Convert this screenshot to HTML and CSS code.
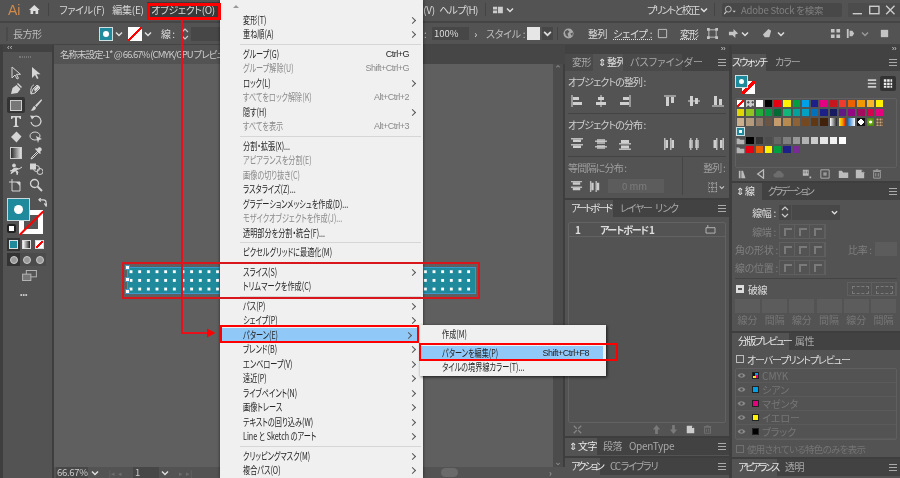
FILE: index.html
```html
<!DOCTYPE html>
<html lang="ja">
<head>
<meta charset="utf-8">
<title>Illustrator</title>
<link rel="stylesheet" href="styles.css">
</head>
<body>
<svg class="defs" width="0" height="0" aria-hidden="true">
  <symbol id="i-arrow" viewBox="0 0 14 14"><path d="M3 1v11l3-3 2 4 1.500-.7-2-4h4z" fill="none" stroke="currentColor"/></symbol>
  <symbol id="i-darrow" viewBox="0 0 14 14"><path d="M3 1v11l3-3 2 4 1.500-.7-2-4h4z" fill="currentColor"/></symbol>
  <symbol id="i-pen" viewBox="0 0 14 14"><path d="M2 12l1.500-6 4-3 4 4-3 4z" fill="currentColor"/><path d="M8.500 1.500l4 4" stroke="currentColor" stroke-width="1.500"/></symbol>
  <symbol id="i-curve" viewBox="0 0 14 14"><path d="M2 12C1 7 3 3 5 3M2 12l4-1 5-5-3-3-4 4z" fill="none" stroke="currentColor"/><path d="M6 10l5-5-2-2-4 4z" fill="currentColor"/></symbol>
  <symbol id="i-brush" viewBox="0 0 14 14"><path d="M12.500 1L6 7.500 7.500 9 13 2.500z" fill="currentColor"/><path d="M5.500 8C3.500 8.500 4 11 1.500 12.500c3 .5 5.500-.5 5.500-3z" fill="currentColor"/></symbol>
  <symbol id="i-t" viewBox="0 0 14 14"><path d="M2 2h10v3h-1l-1-1.500H8v8l1.500.5v1h-5v-1l1.500-.5v-8H4L3 5H2z" fill="currentColor"/></symbol>
  <symbol id="i-rot" viewBox="0 0 14 14"><path d="M3.500 3.500A5 5 0 1 1 2 8" fill="none" stroke="currentColor" stroke-width="1.200"/><path d="M1 1.500l5 .5-3 3.500z" fill="currentColor"/></symbol>
  <symbol id="i-eraser" viewBox="0 0 14 14"><path d="M7.500 1.500l5 5-5 6-5.500-5.500z" fill="currentColor"/></symbol>
  <symbol id="i-shape" viewBox="0 0 14 14"><ellipse cx="6" cy="6" rx="5" ry="4" fill="none" stroke="currentColor"/><path d="M7 6l6 3-3 1-1 3z" fill="currentColor"/></symbol>
  <symbol id="i-grad" viewBox="0 0 14 14"><defs><linearGradient id="g1"><stop offset="0" stop-color="#222"/><stop offset="1" stop-color="#eee"/></linearGradient></defs><rect x="1.500" y="1.500" width="11" height="11" fill="url(#g1)" stroke="#ccc"/></symbol>
  <symbol id="i-drop" viewBox="0 0 14 14"><path d="M9 5l-6 6-1 2 2-1 6-6" fill="none" stroke="currentColor"/><path d="M8 3l1.500-1.500c2-1 4 1 3 3L11 6l1 1-1 1-5-5 1-1z" fill="currentColor"/></symbol>
  <symbol id="i-blend" viewBox="0 0 14 14"><path d="M5 2a1.500 1.500 0 1 1 0 3 1.500 1.500 0 0 1 0-3zM2 12l2-5 3-1 3 1 3-2M6 8l3 2-1 3M4 8l-3 1" fill="currentColor" stroke="currentColor"/></symbol>
  <symbol id="i-sym" viewBox="0 0 14 14"><rect x="1" y="1.500" width="6" height="6" fill="currentColor"/><circle cx="7.500" cy="6.500" r="3" fill="none" stroke="currentColor"/><circle cx="11" cy="9.500" r="3" fill="none" stroke="currentColor"/></symbol>
  <symbol id="i-board" viewBox="0 0 14 14"><path d="M3 1v3H0M3 4h8v9H3z" fill="none" stroke="currentColor"/><path d="M7 4l4 4V4z" fill="currentColor"/></symbol>
  <symbol id="i-zoom" viewBox="0 0 14 14"><circle cx="5.500" cy="5.500" r="4" fill="none" stroke="currentColor" stroke-width="1.300"/><path d="M8.500 8.500l4.500 4.500" stroke="currentColor" stroke-width="2"/></symbol>
  <symbol id="i-burger" viewBox="0 0 8 7"><path d="M0 .5h8M0 3.500h8M0 6.500h8" stroke="currentColor"/></symbol>
  <symbol id="i-chev" viewBox="0 0 8 8"><path d="M1 2.500l3 3 3-3" fill="none" stroke="currentColor" stroke-width="1.500"/></symbol>
  <symbol id="i-updn" viewBox="0 0 8 12"><path d="M1 4l3-3 3 3M1 8l3 3 3-3" fill="none" stroke="currentColor" stroke-width="1.200"/></symbol>
  <symbol id="i-al" viewBox="0 0 14 14"><path d="M1 1h2v12H1z" fill="#999"/><path d="M3 3h6v3H3zM3 8h9v3H3z" fill="currentColor"/></symbol>
  <symbol id="i-ac" viewBox="0 0 14 14"><path d="M6 1h2v12H6z" fill="#999"/><path d="M4 3h6v3H4zM2 8h10v3H2z" fill="currentColor"/></symbol>
  <symbol id="i-ar" viewBox="0 0 14 14"><path d="M11 1h2v12h-2z" fill="#999"/><path d="M5 3h6v3H5zM2 8h9v3H2z" fill="currentColor"/></symbol>
  <symbol id="i-at" viewBox="0 0 14 14"><path d="M1 1h12v2H1z" fill="#999"/><path d="M3 3h3v9H3zM8 3h3v6H8z" fill="currentColor"/></symbol>
  <symbol id="i-am" viewBox="0 0 14 14"><path d="M1 6h12v2H1z" fill="#999"/><path d="M3 2h3v10H3zM8 4h3v6H8z" fill="currentColor"/></symbol>
  <symbol id="i-ab" viewBox="0 0 14 14"><path d="M1 11h12v2H1z" fill="#999"/><path d="M3 2h3v9H3zM8 5h3v6H8z" fill="currentColor"/></symbol>
  <symbol id="i-dt" viewBox="0 0 14 14"><path d="M1 1h12v1.500H1zM1 7h12v1.500H1z" fill="#bbb"/><path d="M3 2.500h8v2.500H3zM3 8.500h8V11H3z" fill="currentColor"/></symbol>
  <symbol id="i-dm" viewBox="0 0 14 14"><path d="M1 3.500h12V5H1zM1 9h12v1.500H1z" fill="#bbb"/><path d="M3 2h8v5H3zM3 8h8v4H3z" fill="currentColor" opacity=".7"/></symbol>
  <symbol id="i-db" viewBox="0 0 14 14"><path d="M1 6h12v1.500H1zM1 11.500h12V13H1z" fill="#bbb"/><path d="M3 3h8v3H3zM3 8.500h8v3H3z" fill="currentColor"/></symbol>
  <symbol id="i-dl" viewBox="0 0 14 14"><path d="M1 1h1.500v12H1zM7 1h1.500v12H7z" fill="#bbb"/><path d="M2.500 3H5v8H2.500zM8.500 3H11v8H8.500z" fill="currentColor"/></symbol>
  <symbol id="i-dc" viewBox="0 0 14 14"><path d="M3 1h1.500v12H3zM9 1h1.500v12H9z" fill="#bbb"/><path d="M2 3h4v8H2zM8 3h4v8H8z" fill="currentColor" opacity=".7"/></symbol>
  <symbol id="i-dr" viewBox="0 0 14 14"><path d="M5 1h1.500v12H5zM11.500 1H13v12h-1.500z" fill="#bbb"/><path d="M2.500 3H5v8H2.500zM9 3h2.500v8H9z" fill="currentColor"/></symbol>
  <symbol id="i-folder" viewBox="0 0 14 12"><path d="M1 2h4l1.500 2H13v7H1z" fill="currentColor"/></symbol>
  <symbol id="i-new" viewBox="0 0 12 12"><path d="M1 1h7l3 3v7H1z" fill="currentColor"/><path d="M8 1v3h3" fill="#555"/></symbol>
  <symbol id="i-trash" viewBox="0 0 12 12"><path d="M2 3h8v8H2zM1 2h10M4.500 1h3M4.500 5v4M7.500 5v4" fill="none" stroke="currentColor"/></symbol>
  <symbol id="i-eye" viewBox="0 0 14 10"><path d="M1 5c3-4.500 9-4.500 12 0-3 4.500-9 4.500-12 0z" fill="currentColor"/><circle cx="7" cy="5" r="2" fill="#505050"/></symbol>
</svg>

<div class="app">
  <header class="menubar jp">
    <span class="logo">Ai</span>
    <svg class="home" viewBox="0 0 14 12"><path d="M7 0l7 6.500h-2V12H8.500V8h-3v4H2V6.500H0z"/></svg>
    <i class="vsep m-home"></i>
    <span class="mn m-file">ファイル(F)</span>
    <span class="mn m-edit">編集(E)</span>
    <span class="mn on">オブジェクト(O)</span>
    <span class="mn m-view">(V)</span>
    <span class="mn m-help">ヘルプ(H)</span>
    <i class="vsep m-v2"></i>
    <svg class="ws" viewBox="0 0 12 8"><path d="M0 0h5v3.500H0zM6 0h6v8H6zM0 4.500h5V8H0z"/></svg>
    <svg class="ch m-wsc"><use href="#i-chev"/></svg>
    <span class="mn m-print">プリントと校正</span>
    <svg class="ch m-prc"><use href="#i-chev"/></svg>
    <i class="vsep m-v3"></i>
    <div class="search">
      <svg class="srch" viewBox="0 0 14 12"><circle cx="5" cy="5" r="3.500" fill="none" stroke="currentColor"/><path d="M2.500 8L0 11" stroke="currentColor" stroke-width="1.500"/><path d="M10 7h4l-2 2z" fill="currentColor"/></svg>
      <span>Adobe Stock を検索</span>
    </div>
    <div class="winbtns">
      <svg viewBox="0 0 18 14"><path d="M4 11h10" stroke="currentColor" stroke-width="1.500"/></svg>
      <svg viewBox="0 0 18 14"><rect x="4" y="3" width="10" height="8" fill="none" stroke="currentColor" stroke-width="1.500"/></svg>
      <svg viewBox="0 0 18 14"><path d="M4.500 2.500l9 9M13.500 2.500l-9 9" stroke="currentColor" stroke-width="1.500"/></svg>
    </div>
  </header>

  <div class="ctrl jp">
    <i class="grip"></i>
    <span class="c-name">長方形</span>
    <span class="sw-fill"><b></b></span>
    <svg class="ch c-ch1"><use href="#i-chev"/></svg>
    <span class="sw-stroke c-stroke"></span>
    <svg class="ch c-ch1"><use href="#i-chev"/></svg>
    <span class="c-sen">線 :</span>
    <svg class="updn"><use href="#i-updn"/></svg>
    <span class="c-input"></span>
    <span class="c-colon">:</span>
    <span class="c-pct">100%</span>
    <span class="c-more">›</span>
    <span class="c-style">スタイル :</span>
    <span class="c-styleb"></span>
    <svg class="ch c-ch2"><use href="#i-chev"/></svg>
    <i class="vsep c-v"></i>
    <svg class="globe" viewBox="0 0 12 12"><circle cx="6" cy="6" r="5.500" fill="#a8a8a8"/><path d="M2 4l3-2 2 2-2 2 1 4-3-2zM8 6l3-1-1 4z" fill="#555"/></svg>
    <span class="c-seiretsu">整列</span>
    <span class="c-shape">シェイプ :</span>
    <svg class="ci c-i1" viewBox="0 0 12 12"><path d="M1.500 1.500h9v9h-9z" fill="none" stroke="currentColor"/></svg>
    <span class="c-henkei">変形</span>
    <svg class="ci c-i2" viewBox="0 0 12 12"><path d="M2 2h8v8H2z" fill="none" stroke="currentColor"/><path d="M0 0h3v3H0zM9 0h3v3H9zM0 9h3v3H0zM9 9h3v3H9z" fill="currentColor"/></svg>
    <svg class="ci c-i3" viewBox="0 0 12 12"><path d="M1 4h5V1l5 5-3 1v4L5 8H1z" fill="currentColor"/></svg>
    <svg class="ch c-ch3"><use href="#i-chev"/></svg>
    <svg class="ci c-i4" viewBox="0 0 12 12"><path d="M1 7l6-6 3 2-2 7H3z" fill="currentColor"/></svg>
    <svg class="ch c-ch4"><use href="#i-chev"/></svg>
    <svg class="ci c-i5" viewBox="0 0 12 12"><path d="M1 1h4v4H1zM7 1h4v4H7zM1 7h4v4H1zM7 7h4v4H7z" fill="currentColor"/></svg>
    <svg class="ci c-i6" viewBox="0 0 12 12"><path d="M2 1h2v10H2zM5 3h3l2 3-2 3H5z" fill="currentColor"/></svg>
    <svg class="ch c-ch5"><use href="#i-chev"/></svg>
    <svg class="ci c-i7" viewBox="0 0 12 12"><path d="M2 2h8v8H2z" fill="currentColor"/></svg>
  </div>

  <div class="main">
    <aside class="tools">
      <div class="t-head">‹‹</div>
      <div class="t-grip"></div>
      <div class="t-grid">
        <svg class="tl"><use href="#i-arrow"/></svg><svg class="tl"><use href="#i-darrow"/></svg>
        <svg class="tl"><use href="#i-pen"/></svg><svg class="tl"><use href="#i-curve"/></svg>
        <span class="t-rect"><i></i></span><svg class="tl"><use href="#i-brush"/></svg>
        <svg class="tl"><use href="#i-t"/></svg><svg class="tl"><use href="#i-rot"/></svg>
        <svg class="tl"><use href="#i-eraser"/></svg><svg class="tl"><use href="#i-shape"/></svg>
        <svg class="tl"><use href="#i-grad"/></svg><svg class="tl"><use href="#i-drop"/></svg>
        <svg class="tl"><use href="#i-blend"/></svg><svg class="tl"><use href="#i-sym"/></svg>
        <svg class="tl"><use href="#i-board"/></svg><svg class="tl"><use href="#i-zoom"/></svg>
      </div>
      <div class="fs">
        <span class="fs-stroke"></span>
        <span class="fs-fill"><b></b></span>
        <svg class="fs-swap" viewBox="0 0 10 10"><path d="M1 2h5a3 3 0 0 1 3 3v3M7 6l2 3 1-3M3 0L1 2l2 2" fill="none" stroke="currentColor" stroke-width="1.300"/></svg>
        <span class="fs-def"></span>
      </div>
      <div class="t-modes">
        <span class="tm tm-on"><i class="tm-c"></i></span>
        <span class="tm"><i class="tm-g"></i></span>
        <span class="tm"><i class="tm-n"></i></span>
      </div>
      <div class="t-draw">
        <span class="td td-on"><i></i></span><span class="td"><i></i></span><span class="td"><i></i></span>
      </div>
      <svg class="t-screen" viewBox="0 0 16 12"><rect x="4.500" y=".5" width="11" height="7" fill="#555" stroke="#bbb"/><rect x=".5" y="4.500" width="9" height="7" fill="#777" stroke="#bbb"/></svg>
      <div class="t-dots">•••</div>
    </aside>

    <section class="doc">
      <div class="doctabs jp"><span class="doctab">名称未設定-1* @ 66.67% (CMYK/GPU プレビュー)</span></div>
      <div class="docmid">
        <div class="canvas">
          <div class="artwork"><i class="h h1"></i><i class="h h2"></i><i class="h h3"></i></div>
        </div>
        <div class="vscroll"><span>⌃</span><span>⌄</span></div>
      </div>
      <div class="status jp">
        <span class="st-zoom">66.67%</span>
        <svg class="ch st-c1"><use href="#i-chev"/></svg>
        <span class="st-nav st-n1">|◂&nbsp;&nbsp;◂</span>
        <span class="st-page">1</span>
        <svg class="ch st-c2"><use href="#i-chev"/></svg>
        <span class="st-nav st-n2">▸&nbsp;&nbsp;▸|</span>
        <span class="st-thumb"></span>
        <span class="st-right">›</span>
      </div>
    </section>

    <div class="col col1 jp">
      <div class="coltop">››</div>
      <section class="panel p-align">
        <div class="tabs">
          <span class="tab t-a">変形</span><span class="tab on t-b">⇕ 整列</span><span class="tab t-c">パスファインダー</span>
          <svg class="burger"><use href="#i-burger"/></svg>
        </div>
        <div class="pb">
          <h3 class="lab">オブジェクトの整列 :</h3>
          <div class="alrow">
            <svg><use href="#i-al"/></svg><svg><use href="#i-ac"/></svg><svg><use href="#i-ar"/></svg>
            <i></i>
            <svg><use href="#i-at"/></svg><svg><use href="#i-am"/></svg><svg><use href="#i-ab"/></svg>
          </div>
          <hr class="psep">
          <h3 class="lab">オブジェクトの分布 :</h3>
          <div class="alrow">
            <svg><use href="#i-dt"/></svg><svg><use href="#i-dm"/></svg><svg><use href="#i-db"/></svg>
            <i></i>
            <svg><use href="#i-dl"/></svg><svg><use href="#i-dc"/></svg><svg><use href="#i-dr"/></svg>
          </div>
          <hr class="psep">
          <div class="spacing">
            <div class="sp-l">
              <h3 class="lab dim">等間隔に分布 :</h3>
              <div class="sp-ctl">
                <svg><use href="#i-dt"/></svg><svg><use href="#i-dl"/></svg>
                <span class="sp-in">0 mm</span>
              </div>
            </div>
            <div class="sp-r">
              <h3 class="lab dim">整列 :</h3>
              <svg class="sp-grid" viewBox="0 0 16 10"><path d="M1 1h8M1 5h8M1 9h8M0 0v10M4 0v10M8 0v10" stroke="#bbb" stroke-dasharray="1 1"/><path d="M11 4l2 2 2-2" fill="none" stroke="#ccc"/></svg>
            </div>
          </div>
        </div>
      </section>

      <section class="panel p-board">
        <div class="tabs">
          <span class="tab on t-d">アートボード</span><span class="tab t-e">レイヤー</span><span class="tab t-f">リンク</span>
          <svg class="burger"><use href="#i-burger"/></svg>
        </div>
        <div class="pb pb-board">
          <div class="blist">
            <div class="brow"><b>1</b><b>アートボード 1</b><svg class="bic" viewBox="0 0 12 10"><path d="M1 3h10v6H1zM3 3V0" fill="none" stroke="#bbb"/></svg></div>
          </div>
          <div class="bfoot">
            <svg class="bf1" viewBox="0 0 12 12"><path d="M1 1l4 4M11 1L7 5M1 11l4-4M11 11L7 7" stroke="#888" stroke-width="1.500"/></svg>
            <svg class="bf-up" viewBox="0 0 10 10"><path d="M5 0l4 5H6.500v5h-3V5H1z"/></svg>
            <svg class="bf-dn" viewBox="0 0 10 10"><path d="M5 10l4-5H6.500V0h-3v5H1z"/></svg>
            <svg class="bf-new"><use href="#i-new"/></svg>
            <svg class="bf-tr"><use href="#i-trash"/></svg>
          </div>
        </div>
      </section>

      <section class="panel p-char">
        <div class="tabs">
          <span class="tab on t-g">⇕ 文字</span><span class="tab t-h">段落</span><span class="tab t-i">OpenType</span>
          <svg class="burger"><use href="#i-burger"/></svg>
        </div>
      </section>
      <section class="panel p-act">
        <div class="tabs">
          <span class="tab on t-j">アクション</span><span class="tab t-k">CC ライブラリ</span>
          <svg class="burger"><use href="#i-burger"/></svg>
        </div>
      </section>
    </div>

    <div class="col col2 jp">
      <div class="coltop">››</div>
      <section class="panel p-sw">
        <div class="tabs">
          <span class="tab on t-l">スウォッチ</span><span class="tab t-m">カラー</span>
          <svg class="burger"><use href="#i-burger"/></svg>
        </div>
        <div class="pb pb-sw">
          <div class="sw-top">
            <span class="mini"><i class="mini-s"></i><i class="mini-f"><b></b></i></span>
            <span class="viewbtns">
              <svg class="vb" viewBox="0 0 12 12"><path d="M1 2h10M1 6h10M1 10h10" stroke="#ccc" stroke-width="2"/></svg>
              <svg class="vb vb-on" viewBox="0 0 12 12"><path d="M1 1h3v3H1zM5 1h3v3H5zM9 1h2v3H9zM1 5h3v3H1zM5 5h3v3H5zM9 5h2v3H9zM1 9h3v2H1zM5 9h3v2H5zM9 9h2v2H9z" fill="#eee"/></svg>
            </span>
          </div>
          <div class="swatches">
            <i class="s s-none"></i><i class="s s-reg"></i><i class="s" style="background:#fff"></i><i class="s" style="background:#000"></i><i class="s" style="background:#e60012"></i><i class="s" style="background:#fff100"></i><i class="s" style="background:#009e41"></i><i class="s" style="background:#00a0e9"></i><i class="s" style="background:#1d2088"></i><i class="s" style="background:#e4007f"></i><i class="s" style="background:#c7161d"></i><i class="s" style="background:#ef3a2d"></i><i class="s" style="background:#eb6100"></i><i class="s" style="background:#f39800"></i><i class="s" style="background:#f8b62d"></i><i class="s" style="background:#fff100"></i>
            <i class="s" style="background:#dfd800"></i><i class="s" style="background:#8fc31f"></i><i class="s" style="background:#22ac38"></i><i class="s" style="background:#009944"></i><i class="s" style="background:#006934"></i><i class="s" style="background:#13b67a"></i><i class="s" style="background:#00a29a"></i><i class="s" style="background:#00a0c1"></i><i class="s" style="background:#0071bc"></i><i class="s" style="background:#1d2088"></i><i class="s" style="background:#171c61"></i><i class="s" style="background:#601986"></i><i class="s" style="background:#920783"></i><i class="s" style="background:#a40b5d"></i><i class="s" style="background:#d6004e"></i><i class="s" style="background:#e4007f"></i>
            <i class="s" style="background:#cbb08f"></i><i class="s" style="background:#b59a7d"></i><i class="s" style="background:#8f7b68"></i><i class="s" style="background:#6a5444"></i><i class="s" style="background:#c69c6d"></i><i class="s" style="background:#b98a50"></i><i class="s" style="background:#8c6239"></i><i class="s" style="background:#75491f"></i><i class="s" style="background:#603813"></i><i class="s" style="background:#42210b"></i><i class="s s-gr1"></i><i class="s s-gr2"></i><i class="s s-gr3"></i><i class="s s-p1"></i><i class="s s-p2"></i><i class="s s-p3"></i>
            <i class="s s-pat"></i>
            <svg class="s-fold"><use href="#i-folder"/></svg><i class="s" style="background:#000"></i><i class="s" style="background:#333"></i><i class="s" style="background:#4d4d4d"></i><i class="s" style="background:#666"></i><i class="s" style="background:#808080"></i><i class="s" style="background:#999"></i><i class="s" style="background:#b3b3b3"></i><i class="s" style="background:#ccc"></i><i class="s" style="background:#e6e6e6"></i><i class="s" style="background:#f2f2f2"></i><i class="s" style="background:#fff"></i>
            <svg class="s-fold"><use href="#i-folder"/></svg><i class="s" style="background:#e60012"></i><i class="s" style="background:#eb6100"></i><i class="s" style="background:#fff100"></i><i class="s" style="background:#009e41"></i><i class="s" style="background:#1d2088"></i><i class="s" style="background:#7b2a95"></i>
          </div>
          <div class="sw-foot">
            <svg class="sf sf1" viewBox="0 0 12 12"><path d="M1 11V2h2v9zM4 11V2h2l3 9z" fill="#bbb"/></svg>
            <svg class="sf sf2" viewBox="0 0 12 12"><path d="M2 6l7-5v10z" fill="none" stroke="#bbb" stroke-width="1.500"/></svg>
            <svg class="sf sf3" viewBox="0 0 14 10"><path d="M3 9a2.500 2.500 0 0 1 0-5 4 4 0 0 1 7.500-.5A3 3 0 0 1 11 9z" fill="#6d6d6d"/></svg>
            <svg class="sf sf4" viewBox="0 0 12 12"><path d="M1 1h7v7H1z M2 2v1h1V2zM4 2v1h1V2zM6 2v1h1V2zM2 4v1h1V4zM4 4v1h1V4zM6 4v1h1V4zM9 9h2v2H9z" fill="#bbb" fill-rule="evenodd"/></svg>
            <svg class="sf sf5" viewBox="0 0 12 12"><path d="M1 1h10v10H1z" fill="none" stroke="#bbb"/><path d="M4 4h4v4H4z" fill="#999"/></svg>
            <svg class="sf sf6"><use href="#i-folder"/></svg>
            <svg class="sf sf7"><use href="#i-new"/></svg>
            <svg class="sf sf8"><use href="#i-trash"/></svg>
          </div>
        </div>
      </section>

      <section class="panel p-st">
        <div class="tabs">
          <span class="tab on t-n">⇕ 線</span><span class="tab t-o">グラデーション</span>
          <svg class="burger"><use href="#i-burger"/></svg>
        </div>
        <div class="pb pb-st">
          <div class="strow"><label class="bright">線幅 :</label><span class="w-box"><svg class="updn"><use href="#i-updn"/></svg></span><span class="w-in"></span><svg class="ch w-ch"><use href="#i-chev"/></svg></div>
          <div class="strow"><label>線端 :</label><span class="tri"><i></i><i></i><i></i></span></div>
          <div class="strow"><label>角の形状 :</label><span class="tri"><i></i><i></i><i></i></span><label class="ratio">比率 :</label><span class="r-in"></span></div>
          <div class="strow"><label>線の位置 :</label><span class="tri"><i></i><i></i><i></i></span></div>
          <hr class="psep st-sep">
          <div class="dash"><span class="cb cb-on"></span><span class="dash-t">破線</span><span class="dashbtn"><i></i><i></i></span></div>
          <div class="dashgrid">
            <i></i><i></i><i></i><i></i><i></i><i></i>
            <span>線分</span><span>間隔</span><span>線分</span><span>間隔</span><span>線分</span><span>間隔</span>
          </div>
        </div>
      </section>

      <section class="panel p-sep">
        <div class="tabs">
          <span class="tab on t-p">分版プレビュー</span><span class="tab t-q">属性</span>
        </div>
        <div class="pb pb-sep">
          <div class="op"><span class="cb"></span><span>オーバープリントプレビュー</span></div>
          <div class="plates">
            <div class="plate"><svg class="eye"><use href="#i-eye"/></svg><i class="chip chip-cmyk"></i><span>CMYK</span></div>
            <div class="plate"><svg class="eye"><use href="#i-eye"/></svg><i class="chip chip-c"></i><span>シアン</span></div>
            <div class="plate"><svg class="eye"><use href="#i-eye"/></svg><i class="chip chip-m"></i><span>マゼンタ</span></div>
            <div class="plate"><svg class="eye"><use href="#i-eye"/></svg><i class="chip chip-y"></i><span>イエロー</span></div>
            <div class="plate"><svg class="eye"><use href="#i-eye"/></svg><i class="chip chip-k"></i><span>ブラック</span></div>
          </div>
          <div class="op op-dim"><span class="cb"></span><span>使用されている特色のみを表示</span></div>
        </div>
      </section>

      <section class="panel p-app">
        <div class="tabs">
          <span class="tab on t-r">アピアランス</span><span class="tab t-s">透明</span>
          <svg class="burger"><use href="#i-burger"/></svg>
        </div>
      </section>
    </div>
  </div>

  <nav class="menu jp">
    <div class="mi up"></div>
    <div class="mi sub"><span>変形(T)</span></div>
    <div class="mi sub"><span>重ね順(A)</span></div>
    <div class="ms"></div>
    <div class="mi"><span>グループ(G)</span><kbd>Ctrl+G</kbd></div>
    <div class="mi off"><span>グループ解除(U)</span><kbd>Shift+Ctrl+G</kbd></div>
    <div class="mi sub"><span>ロック(L)</span></div>
    <div class="mi off"><span>すべてをロック解除(K)</span><kbd>Alt+Ctrl+2</kbd></div>
    <div class="mi sub"><span>隠す(H)</span></div>
    <div class="mi off"><span>すべてを表示</span><kbd>Alt+Ctrl+3</kbd></div>
    <div class="ms"></div>
    <div class="mi"><span>分割・拡張(X)...</span></div>
    <div class="mi off"><span>アピアランスを分割(E)</span></div>
    <div class="mi off"><span>画像の切り抜き(C)</span></div>
    <div class="mi"><span>ラスタライズ(Z)...</span></div>
    <div class="mi"><span>グラデーションメッシュを作成(D)...</span></div>
    <div class="mi off"><span>モザイクオブジェクトを作成(J)...</span></div>
    <div class="mi"><span>透明部分を分割・統合(F)...</span></div>
    <div class="ms"></div>
    <div class="mi"><span>ピクセルグリッドに最適化(M)</span></div>
    <div class="ms"></div>
    <div class="mi sub"><span>スライス(S)</span></div>
    <div class="mi"><span>トリムマークを作成(C)</span></div>
    <div class="ms"></div>
    <div class="mi sub"><span>パス(P)</span></div>
    <div class="mi sub"><span>シェイプ(P)</span></div>
    <div class="mi sub hl"><span>パターン(E)</span></div>
    <div class="mi sub"><span>ブレンド(B)</span></div>
    <div class="mi sub"><span>エンベロープ(V)</span></div>
    <div class="mi sub"><span>遠近(P)</span></div>
    <div class="mi sub"><span>ライブペイント(N)</span></div>
    <div class="mi sub"><span>画像トレース</span></div>
    <div class="mi sub"><span>テキストの回り込み(W)</span></div>
    <div class="mi sub"><span>Line と Sketch のアート</span></div>
    <div class="ms"></div>
    <div class="mi sub"><span>クリッピングマスク(M)</span></div>
    <div class="mi sub"><span>複合パス(O)</span></div>
  </nav>

  <nav class="submenu jp">
    <div class="mi"><span>作成(M)</span></div>
    <div class="ms"></div>
    <div class="mi hl"><span>パターンを編集(P)</span><kbd>Shift+Ctrl+F8</kbd></div>
    <div class="mi"><span>タイルの境界線カラー(T)...</span></div>
  </nav>

  <i class="mark mk-obj"></i>
  <i class="mark mk-art"></i>
  <i class="mark mk-pat"></i>
  <i class="mark mk-edit"></i>
  <svg class="leader" viewBox="0 0 900 478"><path d="M182 20V333H208" fill="none" stroke="#e8101a" stroke-width="2"/><path d="M207 328.500l8.500 4.500-8.500 4.500z" fill="#f00"/></svg>
</div>
</body>
</html>
```

FILE: styles.css
```css
* { box-sizing: border-box; }
html, body { margin: 0; padding: 0; background: #535353; }
.defs { position: absolute; }
i, b { font-style: normal; font-weight: normal; }
h3 { margin: 0; font-weight: normal; }
svg { display: block; }

.jp {
  font-family: "Noto Sans CJK JP", "Noto Sans", sans-serif;
  font-size: 10px;
  font-feature-settings: "palt";
}

.app {
  position: relative;
  width: 900px;
  height: 478px;
  overflow: hidden;
  background: #535353;
  display: flex;
  flex-direction: column;
  filter: blur(.4px);
}

/* top menu bar */
.menubar {
  height: 23px;
  flex: none;
  display: flex;
  align-items: center;
  background: #535353;
  border-bottom: 2px solid #454545;
  color: #d8d8d8;
  letter-spacing: -.2px;
  padding-bottom: 2px;
}
.logo { margin-left: 8px; width: 14px; color: #d08a4a; font: 14px "Liberation Sans", sans-serif; letter-spacing: 0; }
.home { width: 13px; height: 11px; margin-left: 9px; fill: #ddd; }
.vsep { display: block; width: 1px; height: 13px; background: #444; flex: none; }
.m-home { margin-left: 8px; }
.mn { white-space: nowrap; flex: none; }
.m-file { margin-left: 10px; width: 53px; }
.m-edit { width: 35px; }
.mn.on { background: #3a3a3a; width: 74px; height: 16px; padding-left: 4px; line-height: 16px; letter-spacing: -.35px; }
.m-view { margin-left: 202px; width: 16px; }
.m-help { width: 46px; letter-spacing: -.7px; }
.ws { width: 12px; height: 8px; margin-left: 7px; fill: #ccc; }
.ch { width: 8px; height: 8px; color: #ddd; flex: none; }
.m-wsc { margin-left: 3px; }
.m-print { margin-left: 133px; width: 50px; letter-spacing: -1.6px; }
.m-prc { margin-left: 3px; }
.m-v3 { margin-left: 6px; }
.search {
  margin-left: 7px;
  width: 120px;
  height: 14px;
  flex: none;
  background: #484848;
  border-radius: 2px;
  display: flex;
  align-items: center;
  gap: 5px;
  padding-left: 2px;
  color: #808080;
  font-size: 9.500px;
}
.srch { width: 12px; height: 10px; color: #ccc; }
.winbtns { margin-left: 6px; width: 52px; height: 14px; flex: none; display: flex; justify-content: space-between; color: #ccc; background: #4c4c4c; padding: 0 1px; }
.winbtns svg { width: 17px; height: 14px; }

/* control bar */
.ctrl {
  height: 22px;
  flex: none;
  display: flex;
  align-items: center;
  background: #535353;
  border-bottom: 1px solid #444;
  color: #bcbcbc;
  letter-spacing: -.5px;
  white-space: nowrap;
}
.ctrl > span { flex: none; }
.grip { width: 2px; height: 14px; margin-left: 6px; background: #4a4a4a; flex: none; }
.c-name { margin-left: 5px; width: 86px; }
.sw-fill { width: 14px; height: 14px; background: #1f8a9b; border: 1px solid #cfdfe2; display: flex; align-items: center; justify-content: center; flex: none; }
.sw-fill b { width: 6px; height: 6px; border-radius: 50%; background: #fff; }
.c-ch1 { margin-left: 2px; }
.c-stroke { margin-left: 5px; }
.sw-stroke { width: 14px; height: 14px; flex: none; background: linear-gradient(to top left, #fff 45%, #f00 45%, #f00 55%, #fff 55%); }
.c-sen { margin-left: 9px; width: 20px; color: #ddd; }
.updn { width: 8px; height: 12px; color: #ccc; flex: none; }
.c-input { width: 100px; height: 14px; margin-left: 2px; background: #474747; }
.c-colon { margin-left: 133px; width: 8px; }
.c-pct { width: 37px; height: 13px; background: #474747; color: #ddd; padding-left: 2px; line-height: 13px; font-size: 9.500px; letter-spacing: 0; }
.c-more { width: 13px; text-align: center; color: #ddd; }
.c-style { margin-left: 4px; width: 41px; letter-spacing: -.3px; }
.c-styleb { width: 13px; height: 13px; background: #e6e6e6; }
.c-ch2 { margin-left: 2px; background: #474747; height: 13px; width: 11px; padding: 2px 1px; }
.c-v { margin-left: 4px; }
.globe { width: 11px; height: 11px; margin-left: 5px; flex: none; }
.c-seiretsu { margin-left: 14px; width: 25px; color: #ddd; }
.c-shape { width: 42px; color: #ddd; text-decoration: underline dotted; letter-spacing: -.2px; }
.ci { width: 11px; height: 11px; color: #c4c4c4; flex: none; }
.c-i1 { margin-left: 2px; }
.c-henkei { margin-left: 12px; width: 18px; color: #ddd; text-decoration: underline dotted; letter-spacing: -1px; }
.c-i2 { margin-left: 9px; }
.c-i3 { margin-left: 10px; }
.c-ch3 { margin-left: 2px; }
.c-i4 { margin-left: 13px; }
.c-ch4 { margin-left: 4px; }
.c-i5 { margin-left: 45px; }
.c-i6 { margin-left: 4px; }
.c-ch5 { margin-left: 5px; opacity: .5; }
.c-i7 { margin-left: 10px; }

/* main */
.main { flex: 1; display: flex; min-height: 0; background: #3e3e3e; }

.tools {
  width: 51px;
  margin-left: 3px;
  flex: none;
  background: #535353;
  border-right: 2px solid #3e3e3e;
  color: #d4d4d4;
  display: flex;
  flex-direction: column;
  align-items: flex-start;
}
.t-head { width: 100%; height: 7px; background: #424242; color: #ccc; font: 8px/6px "Liberation Sans", sans-serif; padding-left: 4px; }
.t-grip { width: 12px; height: 2px; margin: 4px 0 0 16px; border-top: 1px dotted #777; border-bottom: 1px dotted #777; }
.t-grid { display: grid; grid-template-columns: 20px 20px; grid-auto-rows: 16px; margin: 7px 0 0 3px; justify-items: center; align-items: center; }
.tl { width: 14px; height: 14px; }
.t-rect { width: 18px; height: 16px; background: #333; border-radius: 2px; display: flex; align-items: center; justify-content: center; }
.t-rect i { width: 12px; height: 11px; background: #777; border: 1px solid #ccc; }

.fs { position: relative; width: 46px; height: 38px; margin-top: 5px; flex: none; }
.fs-fill { position: absolute; left: 4px; top: 0; width: 23px; height: 23px; background: #1f8a9b; border: 1px solid #c9d8db; display: flex; align-items: center; justify-content: center; }
.fs-fill b { width: 9px; height: 9px; border-radius: 50%; background: #fff; }
.fs-stroke { position: absolute; left: 16px; top: 12px; width: 24px; height: 24px; border: 5px solid #fff; background: #555; }
.fs-stroke::after { content: ""; position: absolute; left: -9px; top: 7px; width: 33px; height: 1px; background: #f00; border-bottom: 1px solid #f00; transform: rotate(-45deg); }
.fs-swap { position: absolute; left: 35px; top: 0; width: 9px; height: 9px; }
.fs-def { position: absolute; left: 4px; top: 26px; width: 9px; height: 9px; background: #fff; border: 2px solid #222; border-radius: 2px; }

.t-modes, .t-draw { display: grid; grid-template-columns: repeat(3, 13px); margin-left: 4px; }
.t-modes { margin-top: 1px; height: 15px; align-items: center; justify-items: center; }
.tm { width: 13px; height: 13px; display: flex; align-items: center; justify-content: center; }
.tm-on { background: #333; }
.tm i { width: 9px; height: 9px; border: 1px solid #ddd; }
.tm-c { background: #1f8a9b; }
.tm-g { background: linear-gradient(to right, #fff, #222); }
.tm-n { background: linear-gradient(to top left, #fff 42%, #f00 42%, #f00 58%, #fff 58%); }
.t-draw { margin-top: 1px; background: #4b4b4b; height: 13px; }
.td { display: flex; align-items: center; justify-content: center; }
.td-on { background: #333; }
.td i { width: 8px; height: 8px; border-radius: 50%; background: #999; border: 1px solid #ccc; }
.t-screen { width: 15px; height: 11px; margin: 4px 0 0 19px; }
.t-dots { margin: 9px 0 0 17px; font: 7px/10px "Liberation Sans", sans-serif; color: #ccc; letter-spacing: 0; }

.doc { width: 511px; flex: none; display: flex; flex-direction: column; }
.doctabs { height: 19px; background: #464646; flex: none; color: #ccc; letter-spacing: -1px; font-size: 9.500px; }
.doctab { display: block; width: 250px; height: 19px; background: #535353; padding-left: 6px; line-height: 18px; white-space: nowrap; overflow: hidden; }
.docmid { flex: 1; display: flex; min-height: 0; }
.canvas { flex: 1; background: #5f5f5f; position: relative; }
.vscroll { width: 10px; margin-right: 2px; background: #4c4c4c; color: #999; display: flex; flex-direction: column; justify-content: space-between; align-items: center; font: 9px/10px "DejaVu Sans", sans-serif; }
.artwork {
  position: absolute;
  left: 73px;
  top: 203px;
  width: 349px;
  height: 27px;
  border: 1px solid #3a9ad0;
  background-color: #1f8a9b;
  background-image: radial-gradient(circle, #fff 1.400px, transparent 1.900px);
  background-size: 8.670px 8.670px;
  background-position: -1.300px -.6px;
}
.h { position: absolute; left: -3px; width: 5px; height: 5px; background: #fff; border: 1px solid #3a9ad0; }
.h1 { top: -3px; }
.h2 { top: 9px; }
.h3 { top: 21px; }
.status { height: 11px; flex: none; background: #535353; display: flex; align-items: center; color: #ccc; font-size: 9.500px; letter-spacing: -.3px; }
.st-zoom { width: 32px; margin-left: 2px; height: 11px; background: #474747; line-height: 11px; padding-left: 1px; }
.st-c1 { margin-left: 3px; }
.st-nav { color: #6e6e6e; font-size: 7px; letter-spacing: 0; }
.st-n1 { margin-left: 10px; width: 24px; }
.st-page { width: 26px; height: 11px; background: #474747; padding-left: 2px; line-height: 11px; }
.st-c2 { margin-left: 2px; }
.st-n2 { margin-left: 10px; width: 24px; }
.st-thumb { margin-left: 238px; width: 17px; height: 9px; border-radius: 5px; background: #6a6a6a; }
.st-right { margin-left: 91px; color: #aaa; }

/* panels */
.col { flex: none; display: flex; flex-direction: column; gap: 2px; color: #bdbdbd; letter-spacing: -.6px; }
.col1 { width: 164px; }
.col2 { width: 168px; margin-left: 3px; }
.coltop { height: 9px; margin-bottom: -2px; background: #424242; color: #ccc; font: 8px/8px "Liberation Sans", sans-serif; text-align: right; padding-right: 4px; flex: none; }
.panel { background: #535353; flex: none; overflow: hidden; }
.tabs { height: 17px; display: flex; background: #424242; position: relative; }
.tab { display: block; line-height: 16px; padding-left: 7px; color: #a8a8a8; white-space: nowrap; flex: none; }
.tab.on { background: #535353; color: #e6e6e6; }
.burger { position: absolute; right: 3px; top: 5px; width: 8px; height: 7px; color: #aaa; }
.t-a { width: 28px; background: #4a4a4a; }
.t-b { width: 30px; padding-left: 5px; }
.t-c { width: 59px; background: #4a4a4a; letter-spacing: .2px; }
.t-d { width: 48px; padding-left: 6px; letter-spacing: -2.3px; }
.t-e { width: 35px; padding-left: 7px; letter-spacing: -1.300px; }
.t-f { width: 28px; padding-left: 7px; letter-spacing: -1px; }
.t-g { width: 32px; padding-left: 4px; }
.t-h { width: 28px; padding-left: 6px; }
.t-i { width: 48px; padding-left: 4px; letter-spacing: -.3px; }
.t-j { width: 35px; padding-left: 6px; letter-spacing: -2.4px; }
.t-k { width: 50px; padding-left: 10px; letter-spacing: -1.300px; }
.t-l { width: 34px; padding-left: 0; text-align: center; letter-spacing: -1.700px; }
.t-m { width: 38px; padding-left: 9px; letter-spacing: -1px; }
.t-n { width: 30px; padding-left: 4px; }
.t-o { width: 48px; padding-left: 6px; letter-spacing: -2.6px; }
.t-p { width: 57px; padding-left: 6px; letter-spacing: -1.800px; }
.t-q { width: 28px; padding-left: 6px; }
.t-r { width: 45px; padding-left: 6px; letter-spacing: -2.400px; }
.t-s { width: 30px; padding-left: 8px; }

.p-align { height: 144px; }
.pb { padding: 0 3px; }
.lab { font-size: 10px; line-height: 14px; color: #cfcfcf; letter-spacing: -.9px; }
.lab.dim { color: #9f9f9f; letter-spacing: -.8px; }
.p-align .lab { padding-top: 4px; height: 18px; }
.alrow { display: flex; height: 24px; align-items: center; color: #cfcfcf; padding-left: 1px; }
.alrow svg { width: 14px; height: 14px; margin-left: 1px; margin-right: 9px; flex: none; }
.alrow i { width: 21px; flex: none; }
.psep { border: 0; border-top: 1px solid #444; margin: 0; height: 1px; }
.spacing { display: flex; }
.sp-l { width: 115px; border-right: 1px solid #444; height: 38px; }
.sp-ctl { display: flex; align-items: center; gap: 6px; padding-left: 2px; color: #ccc; margin-top: 4px; }
.sp-ctl svg { width: 13px; height: 13px; }
.sp-in { width: 56px; height: 14px; background: #5c5c5c; color: #7c7c7c; padding-left: 14px; line-height: 14px; font-size: 9.500px; letter-spacing: 0; }
.sp-r { flex: 1; text-align: right; padding-right: 1px; }
.sp-grid { width: 17px; height: 11px; margin: 7px 0 0 auto; }

.p-board { height: 236px; }
.pb-board { padding: 5px 3px 0; }
.blist { height: 201px; border: 1px solid #626262; border-radius: 2px; }
.brow { height: 14px; display: flex; align-items: center; border-bottom: 1px solid #626262; color: #ddd; }
.brow b:first-child { width: 31px; padding-left: 6px; font-weight: bold; }
.brow b:nth-child(2) { width: 105px; letter-spacing: -1.200px; font-weight: bold; }
.bic { width: 11px; height: 9px; }
.bfoot { display: flex; align-items: center; height: 13px; color: #8a8a8a; }
.bf1 { width: 9px; height: 9px; margin-left: 5px; }
.bf-up, .bf-dn { width: 9px; height: 9px; fill: #7a7a7a; }
.bf-up { margin-left: 70px; }
.bf-dn { margin-left: 8px; }
.bf-new { width: 9px; height: 9px; margin-left: 8px; color: #ccc; }
.bf-tr { width: 9px; height: 9px; margin-left: 8px; color: #777; }
.p-char { height: 18px; }
.p-act { flex: 1; }

.p-sw { height: 127px; }
.pb-sw { padding: 0 3px; }
.sw-top { height: 27px; display: flex; justify-content: space-between; align-items: center; }
.mini { position: relative; width: 20px; height: 20px; display: block; }
.mini-s { position: absolute; left: 7px; top: 6px; width: 13px; height: 13px; background: linear-gradient(to top left, #fff 42%, #f00 42%, #f00 58%, #fff 58%); }
.mini-f { position: absolute; left: 0; top: 0; width: 13px; height: 13px; background: #1f8a9b; border: 1px solid #d0dfe2; display: flex; align-items: center; justify-content: center; }
.mini-f b { width: 5px; height: 5px; border-radius: 50%; background: #fff; }
.viewbtns { display: flex; align-items: center; margin-top: -3px; }
.vb { width: 16px; height: 15px; padding: 2px 3px; }
.vb-on { background: #333; border-radius: 2px; margin-right: 1px; }
.swatches {
  height: 70px;
  border: 1px solid #606060;
  border-radius: 2px;
  display: grid;
  grid-template-columns: repeat(16, 9.250px);
  grid-auto-rows: 9.200px;
  align-content: start;
}
.s { display: block; border: .5px solid #535353; }
.s-none { background: linear-gradient(to top left, #fff 42%, #f00 42%, #f00 58%, #fff 58%); }
.s-reg { background: radial-gradient(circle, #444 30%, #ccc 32%) 0 0 / 4.500px 4.500px; }
.s-gr1 { background: linear-gradient(to right, #fff, #222); }
.s-gr2 { background: linear-gradient(to right, #fff100, #f39800, #e60012); }
.s-gr3 { background: linear-gradient(to right, #1a6fc0, #fff); }
.s-p1 { background: radial-gradient(circle, #fff 45%, #111 50%); }
.s-p2 { background: radial-gradient(circle, #fff 25%, #7cb518 30%, #4c8a10 70%); }
.s-p3 { background: #8d7358 radial-gradient(circle, #c4a987 30%, #6f5a44 60%) 0 0 / 3px 3px; }
.s-pat { grid-column: 1; background: #1f8a9b radial-gradient(circle, #fff 30%, #1f8a9b 35%); border: 1px solid #cfdfe2; }
.s-fold { grid-column: 1; width: 9px; height: 8px; margin-top: 1px; color: #b5b5b5; }
.sw-foot { position: relative; height: 13px; }
.sf { position: absolute; top: 1px; width: 10px; height: 10px; color: #bbb; }
.sf1 { left: 3px; }
.sf2 { left: 21px; }
.sf3 { left: 38px; width: 12px; }
.sf4 { left: 67px; }
.sf5 { left: 85px; }
.sf6 { left: 103px; width: 11px; }
.sf7 { left: 120px; }
.sf8 { left: 137px; color: #aaa; }

.p-st { height: 148px; }
.pb-st { padding: 0 3px; }
.strow { display: flex; align-items: center; height: 18px; color: #7f7f7f; letter-spacing: -.3px; }
.strow:first-child { margin-top: 3px; margin-bottom: 1px; }
.strow label { width: 41px; text-align: right; white-space: nowrap; margin-right: 3px; }
.strow label.bright { color: #ddd; }
.w-box { width: 12px; height: 15px; background: #474747; display: flex; align-items: center; justify-content: center; }
.w-in { width: 37px; height: 15px; background: #484848; margin-left: 1px; }
.w-ch { width: 11px; height: 15px; padding: 3px 2px; background: #474747; }
.tri { display: flex; border: 1px solid #5f5f5f; height: 15px; }
.tri i { display: block; width: 15px; border-right: 1px solid #5f5f5f; position: relative; }
.tri i::after { content: ""; position: absolute; left: 4px; top: 3px; width: 6px; height: 6px; border: 2px solid #7a7a7a; border-width: 2px 0 0 2px; }
.strow label.ratio { margin-left: 22px; width: 28px; }
.r-in { width: 29px; height: 14px; background: #5c5c5c; }
.st-sep { margin-top: 2px; }
.dash { display: flex; align-items: center; height: 20px; margin-bottom: 1px; }
.cb { display: block; width: 8px; height: 8px; border: 1px solid #bbb; margin-left: 1px; flex: none; }
.cb-on { background: #ddd; border-color: #ddd; position: relative; }
.cb-on::after { content: ""; position: absolute; left: 1px; top: 2px; width: 4px; height: 2px; background: #555; }
.dash-t { margin-left: 4px; color: #ddd; }
.dashbtn { display: flex; margin-left: auto; border: 1px solid #5f5f5f; height: 14px; }
.dashbtn i { display: block; width: 24px; border-right: 1px solid #5f5f5f; position: relative; }
.dashbtn i::after { content: ""; position: absolute; left: 4px; top: 3px; width: 15px; height: 6px; border: 1px dashed #7a7a7a; }
.dashgrid { display: grid; grid-template-columns: repeat(6, 25px); column-gap: 2.200px; grid-template-rows: 14px 14px; margin-top: -1px; }
.dashgrid i { display: block; background: #5c5c5c; }
.dashgrid span { text-align: center; color: #777; line-height: 14px; letter-spacing: 0; }

.p-sep { height: 124px; }
.pb-sep { padding: 0 3px; }
.op { display: flex; align-items: center; gap: 3px; height: 18px; color: #ddd; letter-spacing: -1.100px; }
.op-dim { color: #747474; height: 16px; margin-top: 1px; letter-spacing: -.7px; font-size: 9.500px; }
.op-dim .cb { border-color: #707070; }
.plates { height: 72px; border: 1px solid #5f5f5f; border-radius: 2px; }
.plate { height: 14px; display: flex; align-items: center; color: #767676; border-bottom: 1px solid #5a5a5a; letter-spacing: 0; }
.eye { width: 9px; height: 7px; margin-left: 1px; color: #8a8a8a; }
.chip { display: block; width: 7px; height: 7px; margin-left: 6px; border: 1px solid #222; flex: none; }
.chip-cmyk { background: conic-gradient(#00a0e9 25%, #e4007f 25% 50%, #fff100 50% 75%, #111 75%); }
.chip-c { background: #00a0e9; }
.chip-m { background: #e4007f; }
.chip-y { background: #fff100; }
.chip-k { background: #000; }
.plate span { margin-left: 3px; }
.p-app { flex: 1; }

/* menus */
.menu, .submenu { position: absolute; background: #f0f0f0; color: #262626; font-size: 10.500px; }
.menu { left: 220px; top: 0; width: 203px; height: 478px; box-shadow: 0 0 3px rgba(0,0,0,.6); }
.mi { height: 14.500px; line-height: 14px; padding-left: 23px; padding-right: 14px; position: relative; display: flex; justify-content: space-between; white-space: nowrap; }
.mi > span { display: block; flex: none; transform: scaleX(.68); transform-origin: left center; }
.mi.off { color: #8a8a8a; }
.mi.up { height: 12.750px; }
.mi.up::after { content: ""; position: absolute; left: 13px; top: 5px; border: 3px solid transparent; border-bottom: 3px solid #999; border-top: 0; }
.mi.sub::after { content: ""; position: absolute; right: 8px; top: 5px; width: 4px; height: 4px; border: solid #555; border-width: 1px 1px 0 0; transform: rotate(45deg); }
.mi.hl { background: #90c8f8; }
.mi kbd { font: 9px/14px "Liberation Sans", sans-serif; letter-spacing: -.5px; }
.menu .hl { margin-right: 4px; }
.ms { height: 5px; margin-left: 20px; margin-right: 2px; position: relative; }
.ms::after { content: ""; position: absolute; left: 0; right: 0; top: 2px; height: 1px; background: #d6d6d6; }
.submenu { left: 420px; top: 325px; width: 186px; height: 51px; padding-top: 2px; box-shadow: 1px 1px 3px rgba(0,0,0,.7); }
.submenu .mi { padding-left: 22px; }
.submenu .hl { margin-right: 3px; }
.submenu .ms { height: 4px; margin: 0; }
.submenu .ms::after { display: none; }

/* annotations */
.mark { position: absolute; display: block; border: 2px solid #f00; }
.mk-obj { left: 147px; top: 3px; width: 74px; height: 17px; border-width: 3px; }
.mk-art { left: 122px; top: 262px; width: 358px; height: 37px; border-color: #d8161c; }
.mk-pat { left: 220px; top: 325px; width: 199px; height: 18px; }
.mk-edit { left: 419px; top: 343px; width: 199px; height: 18px; }
.leader { position: absolute; left: 0; top: 0; width: 900px; height: 478px; pointer-events: none; }
```
